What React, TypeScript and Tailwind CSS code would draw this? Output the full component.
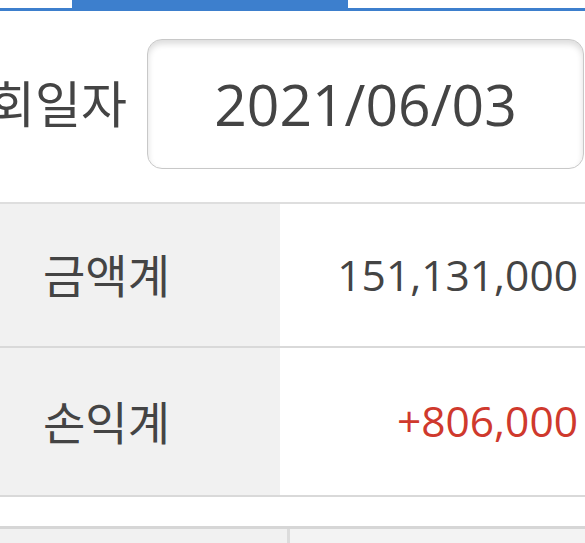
import React from "react";

// summary rows below the date picker
const rows = [
  { label: "금액계", value: "151,131,000", red: false },
  { label: "손익계", value: "+806,000", red: true },
];

const font = "font-['Open_Sans','Noto_Sans_CJK_KR',sans-serif]";

export default function App() {
  return (
    <div className={`w-[585px] h-[543px] overflow-hidden bg-white text-[#444] ${font}`}>
      {/* tab strip */}
      <div className="relative h-[11px] border-b-[3px] border-[#3d7fcd]">
        <div className="absolute left-[72px] top-0 h-[11px] w-[276px] bg-[#3d7fcd]" />
      </div>

      {/* date row */}
      <div className="mt-[28px] flex h-[130px] items-center">
        <div className="flex w-[147px] shrink-0 justify-end overflow-hidden whitespace-nowrap pr-[20px] text-[50px] leading-none">
          조회일자
        </div>
        <div className="flex h-full w-[437px] items-center justify-center rounded-[15px] border border-[#c8c8c8] shadow-[inset_0_4px_6px_rgba(0,0,0,0.14)] text-[57px] leading-none">
          2021/06/03
        </div>
      </div>

      {/* totals table */}
      <div className="mt-[33px] border-t-2 border-[#dedede]">
        {rows.map((r, i) => (
          <div
            key={r.label}
            className={`flex ${i === 0 ? "h-[144px]" : "h-[149px]"} border-b-2 border-[#d9d9d9]`}
          >
            <div className="flex w-[280px] shrink-0 items-center bg-[#f1f1f1] pl-[43px] text-[46px] leading-none">
              {r.label}
            </div>
            <div
              className={`flex flex-1 items-center justify-end pr-[7px] text-[42.5px] leading-none ${
                r.red ? "text-[#cf392d]" : ""
              }`}
            >
              {r.value}
            </div>
          </div>
        ))}
      </div>

      {/* next table, cut off */}
      <div className="mt-[29px] flex h-[20px] border-t-[3px] border-[#d6d6d6] bg-[#f1f1f1]">
        <div className="w-[290px] border-r-[3px] border-[#dcdcdc]" />
        <div className="flex-1 bg-[#f3f3f3]" />
      </div>
    </div>
  );
}
